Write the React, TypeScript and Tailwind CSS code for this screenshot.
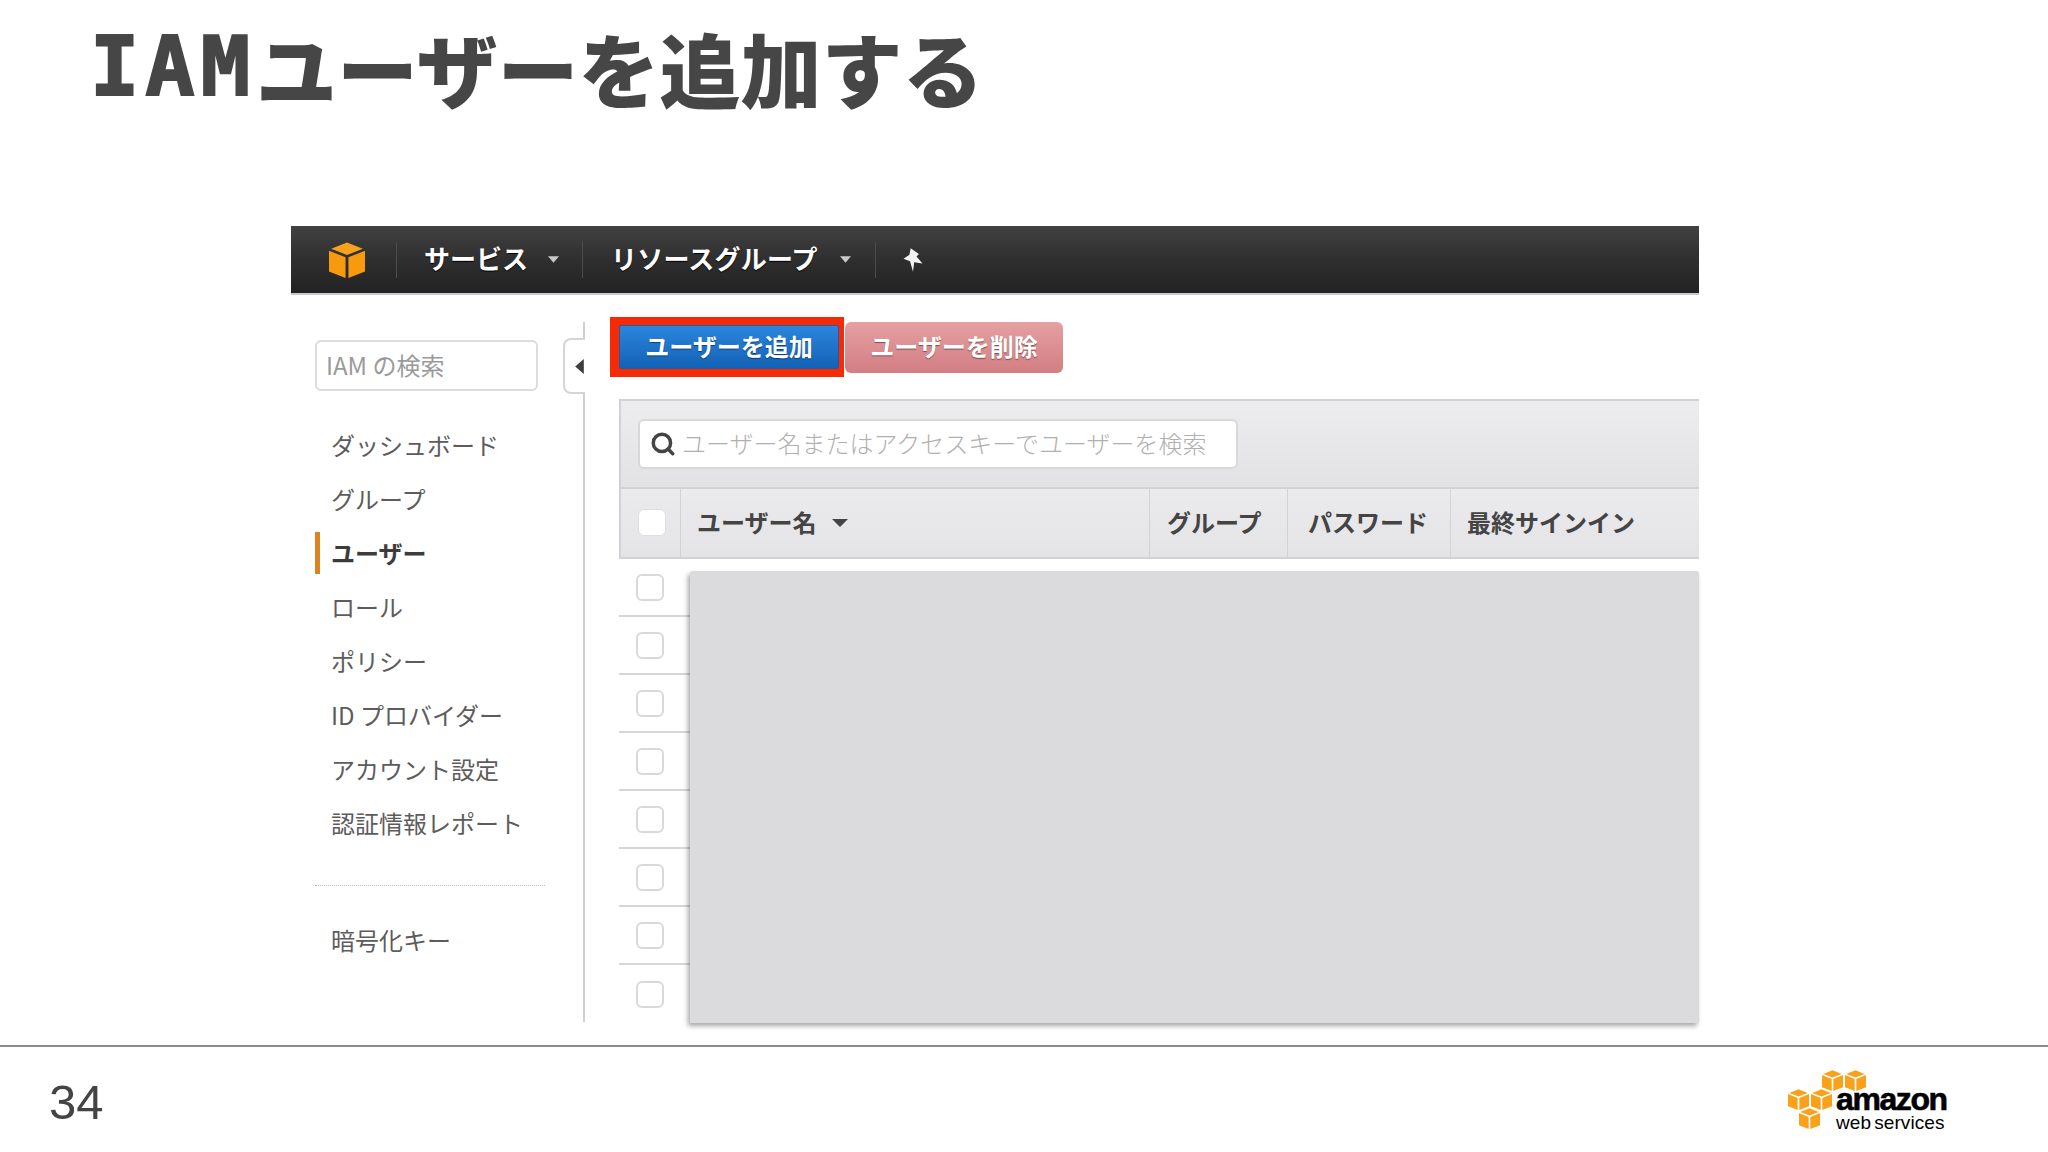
import React from "react";
import { Search } from "lucide-react";

const JP = "font-['Noto_Sans_CJK_JP','Noto_Sans',sans-serif]";

function Cube({ className, top = "#f7a21b", side = "#f79a0e" }: { className?: string; top?: string; side?: string }) {
  return (
    <svg viewBox="0 0 20 20" className={className}>
      <polygon points="10,0.3 18.8,3.7 10,7.2 1.2,3.7" fill={top} />
      <polygon points="0,4.8 9.2,8.5 9.2,20 0,16.4" fill={side} />
      <polygon points="10.8,8.5 20,4.8 20,16.4 10.8,20" fill={side} />
    </svg>
  );
}

function Caret() {
  return (
    <svg viewBox="0 0 10 6" className="w-[11px] h-[7px]">
      <polygon points="0,0 10,0 5,6" fill="#c8c8c8" />
    </svg>
  );
}

function Divider() {
  return <div className="w-px h-[36px] bg-[#4c4c4c]" />;
}

function NavBar() {
  return (
    <div className="h-[67px] flex items-center bg-gradient-to-b from-[#414141] via-[#2f2f2f] to-[#232224] border-b-2 border-[#c9c9c9] box-content -mb-[2px] text-white font-bold text-[26px] [text-shadow:0_1px_1px_#000]">
      <Cube className="w-[36px] h-[36px] ml-[38px]" />
      <div className="ml-[31px]"><Divider /></div>
      <span className="ml-[27px] leading-none -mt-[3px]">サービス</span>
      <div className="ml-[20px]"><Caret /></div>
      <div className="ml-[23px]"><Divider /></div>
      <span className="ml-[28px] leading-none -mt-[3px] tracking-[0.2px]">リソースグループ</span>
      <div className="ml-[22px]"><Caret /></div>
      <div className="ml-[24px]"><Divider /></div>
      <svg viewBox="0 0 20 22" className="w-[24px] h-[26px] ml-[25px]">
        <path d="M8 1 L15 6 L13 8 L18 14 L11 13 L10 21 L7.5 12 L2 10 L7 6.5 Z" fill="#f4f4f4" />
      </svg>
    </div>
  );
}

const items = ["ダッシュボード", "グループ", "ユーザー", "ロール", "ポリシー", "ID プロバイダー", "アカウント設定", "認証情報レポート"];

function Sidebar() {
  return (
    <div className="w-[294px] shrink-0 flex flex-col pl-[24px] pt-[18px] mt-[29px] relative border-r-2 border-[#cfcfcf] h-[700px]">
      <div className="w-[223px] h-[51px] shrink-0 border-2 border-[#dcdcdc] rounded-[6px] flex items-center pl-[9px] pb-[2px] text-[24px] text-[#9a9a9a]">
        IAM の検索
      </div>
      <div className="flex flex-col mt-[27px]">
        {items.map((t) =>
          t === "ユーザー" ? (
            <div key={t} className="h-[54px] flex items-center relative pl-[16px] text-[24px] font-bold text-[#3c3c3c]">
              <div className="absolute left-0 top-[6px] w-[5px] h-[42px] bg-[#dd8220]" />
              {t}
            </div>
          ) : (
            <div key={t} className="h-[54px] flex items-center pl-[16px] text-[24px] text-[#5c5c5c] font-normal">
              {t}
            </div>
          )
        )}
      </div>
      <div className="w-[230px] border-t border-dotted border-[#bdbdbd] mt-[35px]" />
      <div className="h-[54px] flex items-center pl-[16px] mt-[27px] text-[24px] text-[#5c5c5c]">暗号化キー</div>
      <div className="absolute right-[-2px] top-[16px] w-[22px] h-[56px] bg-white border-2 border-r-0 border-[#d5d5d5] rounded-l-[8px] flex items-center justify-end pr-[1px]">
        <svg viewBox="0 0 8 14" className="w-[9px] h-[15px]">
          <polygon points="8,0 8,14 0,7" fill="#3e3e3e" />
        </svg>
      </div>
    </div>
  );
}

function Checkbox({ white }: { white?: boolean }) {
  return (
    <div className={`w-[28px] h-[27px] rounded-[6px] ${white ? "bg-white border border-[#dedede]" : "bg-white border-2 border-[#d9d9d9]"}`} />
  );
}

function HeaderCell({ w, children }: { w: string; children: React.ReactNode }) {
  return <div className={`${w} h-full flex items-center shrink-0 border-r border-[#d3d3d3]`}>{children}</div>;
}

function Content() {
  return (
    <div className="flex-1 flex flex-col pl-[34px] min-w-0 pt-[24px]">
      <div className="flex items-center h-[60px] text-white font-bold text-[24px] [text-shadow:0_1px_1px_rgba(0,0,0,0.45)]">
        <div className="-ml-[9px] pl-[9px] pr-[5px] py-[8px] bg-[#f62a06] shrink-0">
          <div className="w-[220px] h-[44px] rounded-[2px] bg-gradient-to-b from-[#2c86dc] to-[#1262b6] flex items-center justify-center border border-[#1a5fa8] pb-[2px]">
            ユーザーを追加
          </div>
        </div>
        <div className="w-[218px] h-[51px] ml-[1px] rounded-[6px] bg-gradient-to-b from-[#e5a0a2] to-[#d27e83] flex items-center justify-center pb-[2px]">
          ユーザーを削除
        </div>
      </div>
      <div className="h-[89px] mt-[22px] border-t-2 border-l-2 border-[#d2d2d4] bg-gradient-to-b from-[#edecef] to-[#e2e2e4] flex items-center pl-[17px] pb-[2px]">
        <div className="w-[600px] h-[50px] bg-white border-2 border-[#d8d8d8] rounded-[6px] flex items-center pl-[10px] text-[24px] text-[#b0b0b0] font-light">
          <Search size={26} strokeWidth={3.2} className="text-[#444] shrink-0 mr-[6px]" />
          <span className="-mt-[2px]">ユーザー名またはアクセスキーでユーザーを検索</span>
        </div>
      </div>
      <div className="h-[72px] border-y-2 border-l-2 border-[#d2d2d4] bg-gradient-to-b from-[#ebebed] to-[#e4e4e6] flex items-center text-[24px] font-bold text-[#444] -mt-px">
        <HeaderCell w="w-[60px]">
          <div className="ml-[17px] -mt-[2px]"><Checkbox white /></div>
        </HeaderCell>
        <HeaderCell w="w-[469px]">
          <span className="ml-[16px] -mt-[2px]">ユーザー名</span>
          <svg viewBox="0 0 14 7" className="w-[16px] h-[8px] ml-[15px]">
            <polygon points="0,0 14,0 7,7" fill="#444" />
          </svg>
        </HeaderCell>
        <HeaderCell w="w-[138px]">
          <span className="ml-[17px] -mt-[2px]">グループ</span>
        </HeaderCell>
        <HeaderCell w="w-[163px]">
          <span className="ml-[20px] -mt-[2px]">パスワード</span>
        </HeaderCell>
        <span className="ml-[16px] -mt-[2px]">最終サインイン</span>
      </div>
      <div className="relative">
        {Array.from({ length: 8 }).map((_, i) => (
          <div key={i} className={`h-[58px] flex items-center pl-[17px] ${i < 7 ? "border-b-2 border-[#d6d6d6]" : ""}`}>
            <Checkbox />
          </div>
        ))}
        <div className="absolute left-[71px] right-0 top-[12px] h-[452px] bg-[#dbdadc] rounded-t-[3px] shadow-[-2px_3px_5px_rgba(0,0,0,0.35)]" />
      </div>
    </div>
  );
}

function AwsLogo() {
  const c = "#f9a11b";
  return (
    <div className="flex items-start w-[160px] h-[60px] relative">
      <Cube className="absolute left-[34px] top-0 w-[21px] h-[21px]" top={c} side={c} />
      <Cube className="absolute left-[57px] top-0 w-[21px] h-[21px]" top={c} side={c} />
      <Cube className="absolute left-0 top-[19px] w-[21px] h-[21px]" top={c} side={c} />
      <Cube className="absolute left-[23px] top-[19px] w-[21px] h-[21px]" top={c} side={c} />
      <Cube className="absolute left-[11px] top-[38px] w-[21px] h-[21px]" top={c} side={c} />
      <div className="absolute left-[48px] top-[14px] font-['Liberation_Sans',sans-serif] text-black leading-none">
        <div className="text-[32px] font-bold tracking-[-1.4px] leading-[30px] [-webkit-text-stroke:0.6px_#000]">amazon</div>
        <div className="text-[19px] tracking-[0.1px] leading-[17px] whitespace-nowrap">web<span className="ml-[3px]">services</span></div>
      </div>
    </div>
  );
}

export default function App() {
  return (
    <div className={`w-[2048px] h-[1152px] bg-white flex flex-col overflow-hidden ${JP}`}>
      <header className="h-[226px] shrink-0 pl-[90px] pt-[27px]">
        <h1 className="text-[81px] leading-[80px] font-black text-[#464646] flex items-center whitespace-nowrap">
          <span className="font-['DejaVu_Sans_Mono',monospace] font-bold text-[82px] tracking-[6px] leading-[80px] [-webkit-text-stroke:2px_#464646]">IAM</span>
          <span>ユーザーを追加する</span>
        </h1>
      </header>
      <main className="flex-1 pl-[291px] pr-[349px] min-h-0">
        <NavBar />
        <div className="flex">
          <Sidebar />
          <Content />
        </div>
      </main>
      <footer className="h-[107px] shrink-0 border-t-2 border-[#8a8a8a] flex items-center justify-between pl-[49px] pr-[100px]">
        <span className="font-['Liberation_Sans',sans-serif] text-[49px] text-[#444] leading-none pt-[5px]">34</span>
        <AwsLogo />
      </footer>
    </div>
  );
}
